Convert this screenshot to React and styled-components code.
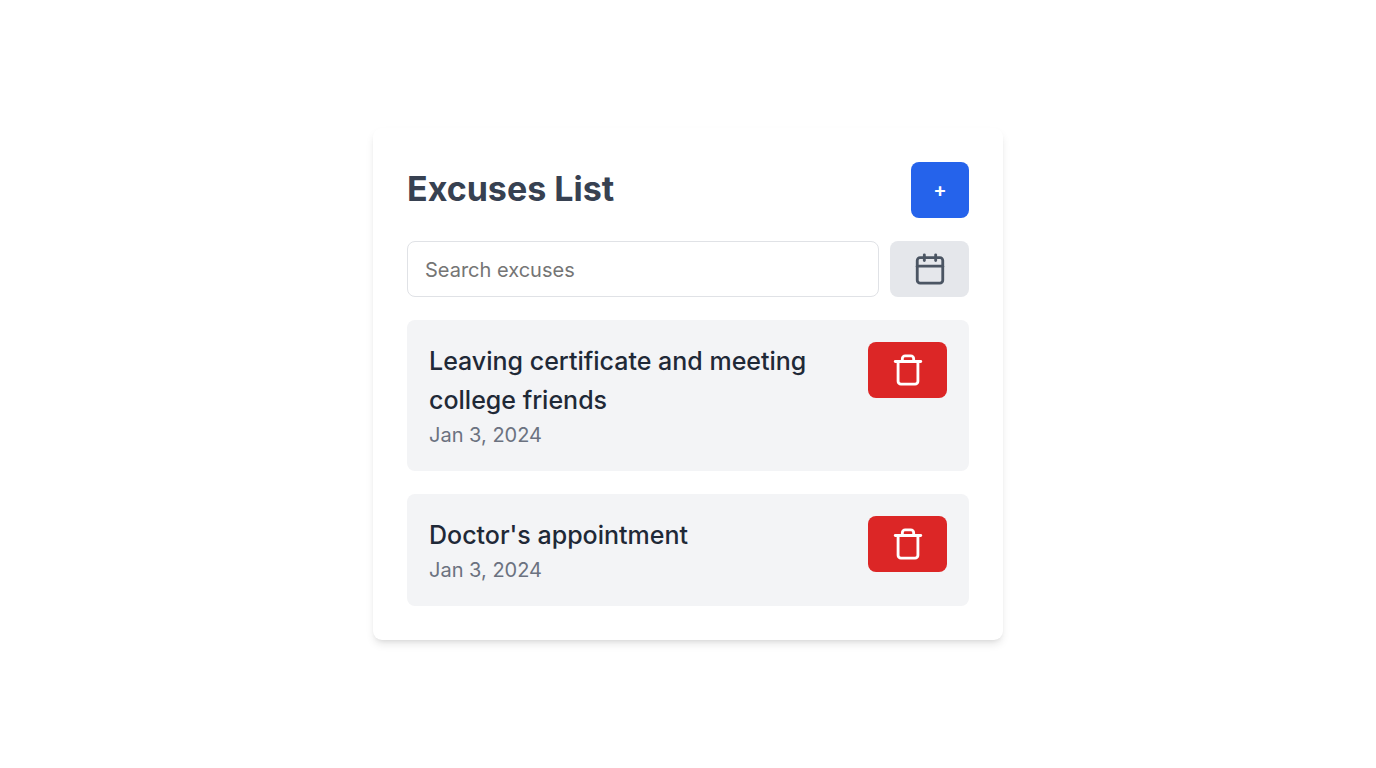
import React, { useState } from "react";
import styled, { createGlobalStyle } from "styled-components";
import { Calendar, Trash } from "lucide-react";

const GlobalStyle = createGlobalStyle`
  *, *::before, *::after { box-sizing: border-box; }
  body { margin: 0; background: #fff; font-family: Inter, "Liberation Sans", sans-serif; }
  h1, h2, p, ul { margin: 0; padding: 0; }
  button, input { font: inherit; }
`;

const Page = styled.div`
  min-height: 100vh;
  display: flex;
  align-items: center;
  justify-content: center;
`;

const Card = styled.main`
  width: 100%;
  max-width: 630px;
  padding: 34px;
  background: #fff;
  border-radius: 9px;
  box-shadow: 0 5px 8px -1px rgba(0, 0, 0, 0.1), 0 3px 5px -3px rgba(0, 0, 0, 0.1);
`;

const Header = styled.header`
  display: flex;
  align-items: flex-start;
  justify-content: space-between;
  margin-bottom: 23px;
`;

const Title = styled.h1`
  font-size: 34px;
  line-height: 54px;
  font-weight: 700;
  color: #374151;
`;

const Button = styled.button`
  display: flex;
  flex-shrink: 0;
  align-items: center;
  justify-content: center;
  height: 56px;
  min-width: ${({ $tone }) => ($tone === "primary" ? "58px" : "79px")};
  padding: 0 22px;
  border: 0;
  border-radius: 8px;
  font-size: 20px;
  line-height: 28px;
  font-weight: 600;
  cursor: pointer;
  color: ${({ $tone }) => ($tone === "muted" ? "#4b5563" : "#fff")};
  background: ${({ $tone }) =>
    ({ primary: "#2563eb", muted: "#e5e7eb", danger: "#dc2626" })[$tone]};
`;

const SearchRow = styled.div`
  display: flex;
  gap: 11px;
  margin-bottom: 23px;
`;

const SearchInput = styled.input`
  flex: 1;
  min-width: 0;
  height: 56px;
  padding: 2px 17px 0;
  border: 1px solid #e0e2e6;
  border-radius: 8px;
  font-size: 20px;
  color: #1f2937;
  &::placeholder { color: #757575; opacity: 1; }
`;

const List = styled.ul`
  display: flex;
  flex-direction: column;
  gap: 23px;
  list-style: none;
`;

const Item = styled.li`
  display: flex;
  align-items: flex-start;
  justify-content: space-between;
  gap: 22px;
  padding: 22px 22px 20px;
  background: #f3f4f6;
  border-radius: 8px;
`;

const ItemTitle = styled.h2`
  font-size: 25px;
  line-height: 39px;
  font-weight: 500;
  color: #1f2937;
`;

const ItemDate = styled.p`
  font-size: 20px;
  line-height: 31px;
  color: #6b7280;
`;

const excuses = [
  { title: "Leaving certificate and meeting college friends", date: "Jan 3, 2024" },
  { title: "Doctor's appointment", date: "Jan 3, 2024" },
];

export default function App() {
  const [query, setQuery] = useState("");
  return (
    <Page>
      <GlobalStyle />
      <Card>
        <Header>
          <Title>Excuses List</Title>
          <Button type="button" $tone="primary" aria-label="Add excuse">+</Button>
        </Header>
        <SearchRow>
          <SearchInput
            type="text"
            aria-label="Search excuses"
            placeholder="Search excuses"
            value={query}
            onChange={(e) => setQuery(e.target.value)}
          />
          <Button type="button" $tone="muted" aria-label="Choose date">
            <Calendar size={34} />
          </Button>
        </SearchRow>
        <List>
          {excuses.map((excuse) => (
            <Item key={excuse.title}>
              <div>
                <ItemTitle>{excuse.title}</ItemTitle>
                <ItemDate>{excuse.date}</ItemDate>
              </div>
              <Button type="button" $tone="danger" aria-label={`Delete ${excuse.title}`}>
                <Trash size={34} />
              </Button>
            </Item>
          ))}
        </List>
      </Card>
    </Page>
  );
}
